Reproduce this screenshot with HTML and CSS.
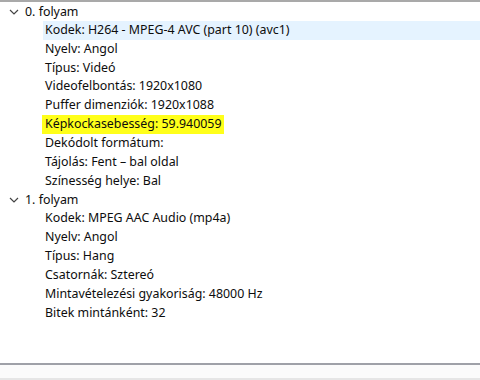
FILE: index.html
```html
<!DOCTYPE html>
<html>
<head>
<meta charset="utf-8">
<link rel="stylesheet" href="styles.css">
</head>
<body>
<div class="panel">
  <ul class="tree">
    <li class="node">
      <div class="head"><svg class="chev" width="10" height="6" viewBox="0 0 10 6"><polyline points="1,1 5,5 9,1" fill="none" stroke="#444" stroke-width="1.2"/></svg><span>0. folyam</span></div>
      <ul class="kids">
        <li class="row sel">Kodek: H264 - MPEG-4 AVC (part 10) (avc1)</li>
        <li class="row">Nyelv: Angol</li>
        <li class="row">Típus: Videó</li>
        <li class="row">Videofelbontás: 1920x1080</li>
        <li class="row">Puffer dimenziók: 1920x1088</li>
        <li class="row"><span class="mark">Képkockasebesség: 59.940059</span></li>
        <li class="row">Dekódolt formátum:</li>
        <li class="row">Tájolás: Fent – bal oldal</li>
        <li class="row">Színesség helye: Bal</li>
      </ul>
    </li>
    <li class="node">
      <div class="head"><svg class="chev" width="10" height="6" viewBox="0 0 10 6"><polyline points="1,1 5,5 9,1" fill="none" stroke="#444" stroke-width="1.2"/></svg><span>1. folyam</span></div>
      <ul class="kids">
        <li class="row">Kodek: MPEG AAC Audio (mp4a)</li>
        <li class="row">Nyelv: Angol</li>
        <li class="row">Típus: Hang</li>
        <li class="row">Csatornák: Sztereó</li>
        <li class="row">Mintavételezési gyakoriság: 48000 Hz</li>
        <li class="row">Bitek mintánként: 32</li>
      </ul>
    </li>
  </ul>
</div>
<div class="footer"></div>
</body>
</html>
```
FILE: styles.css
```css
html, body {
  margin: 0;
  padding: 0;
  background: #ffffff;
}
body {
  width: 480px;
  height: 380px;
  overflow: hidden;
  font-family: "Noto Sans", "Open Sans", sans-serif;
  font-size: 12.4px;
  color: #0d0d0d;
}
.panel {
  border-top: 2px solid #a9a9a9;
  height: 363px;
  box-sizing: border-box;
}
.tree, .kids {
  list-style: none;
  margin: 0;
  padding: 0;
}
.head {
  display: flex;
  align-items: center;
  height: 18.85px;
  padding-left: 9px;
}
.chev {
  margin-right: 6px;
  margin-top: 1px;
}
.row {
  height: 18.85px;
  line-height: 18.85px;
  margin-left: 43px;
  padding-left: 2px;
  white-space: nowrap;
}
.sel {
  background: #e5f3ff;
}
.mark {
  display: inline-block;
  background: #ffff1a;
  margin-left: -3px;
  padding: 0 3px;
}
.footer {
  border-top: 2px solid #9fa1a8;
  height: 13px;
  background: #fbfbfb;
  border-bottom: 2px solid #e6e6e6;
}
```
